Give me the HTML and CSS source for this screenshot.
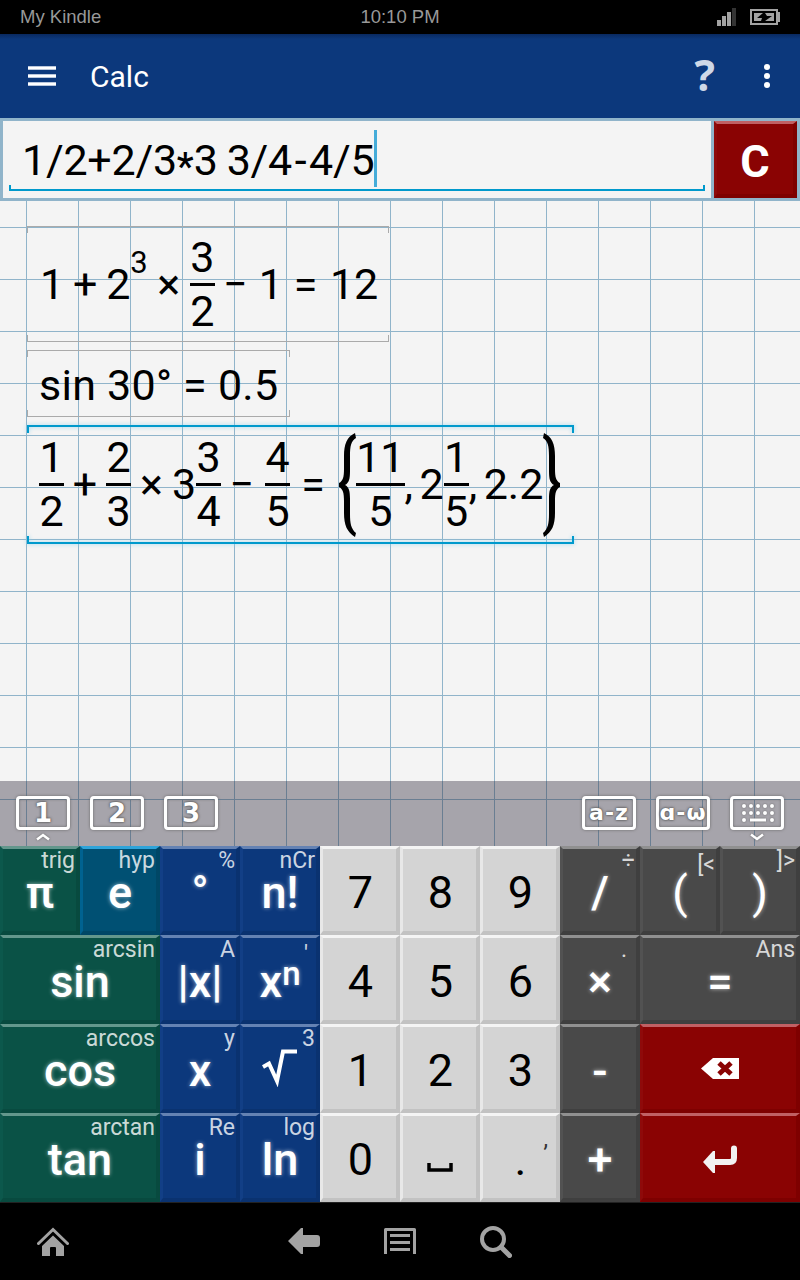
FILE: index.html
```html
<!DOCTYPE html>
<html>
<head>
  <meta charset="UTF-8">
  <title>Calc</title>
  <link rel="stylesheet" href="styles.css">
</head>
<body>
  <div class="statusbar">
    <span class="device">My Kindle</span>
    <span class="clock">10:10 PM</span>
    <div class="indicators">
      <svg width="19" height="18" viewBox="0 0 19 18">
        <path fill="#a3a3a3" d="M0 12h4v6H0zM5 8h4v10H5zM10 4h4v14h-4z"/>
        <path fill="#333" d="M15 0h4v18h-4z"/>
      </svg>
      <svg width="30" height="16" viewBox="0 0 30 16">
        <path fill="none" stroke="#a3a3a3" stroke-width="2" d="M1 1h26v14H1z"/>
        <path fill="#a3a3a3" d="M28 3h2v10h-2zM4 4h9l-6 5h5l-1 3H4zM15 4h9v8h-9l7-5h-5z"/>
      </svg>
    </div>
  </div>

  <header>
    <svg class="menu" width="28" height="22" viewBox="0 0 28 22">
      <path stroke="#b9c6dc" stroke-width="4" d="M0 3h28M0 11h28M0 19h28"/>
      <path stroke="#fff" stroke-width="2" d="M0 3h28M0 11h28M0 19h28"/>
    </svg>
    <h1>Calc</h1>
    <span class="help">?</span>
    <svg width="6" height="24" viewBox="0 0 6 24">
      <g fill="#fff"><circle cx="3" cy="3" r="3"/><circle cx="3" cy="12" r="3"/><circle cx="3" cy="21" r="3"/></g>
    </svg>
  </header>

  <div class="entry">
    <div class="field"><div class="line"><span>1/2+2/3</span><span class="star">*</span><span>3 3/4</span><span class="dash">-</span><span>4/5</span><i class="cursor"></i></div></div>
    <button class="clear red">C</button>
  </div>

  <div class="paper">
    <div class="sheet">
      <div class="expr first">
        <span>1</span><span class="op w42">+</span><span>2</span><span class="sup">3</span><span class="op w42">×</span>
        <span class="frac"><span>3</span><span>2</span></span>
        <span class="op w45">−</span><span>1</span><span class="op w47">=</span><span>12</span>
      </div>
      <div class="expr second"><span>sin 30° = 0.5</span></div>
      <div class="expr third">
        <span class="frac"><span>1</span><span>2</span></span>
        <span class="op w42">+</span>
        <span class="frac"><span>2</span><span>3</span></span>
        <span class="op w41">×</span><span>3</span>
        <span class="frac"><span>3</span><span>4</span></span>
        <span class="op w44">−</span>
        <span class="frac"><span>4</span><span>5</span></span>
        <span class="op w49">=</span>
        <svg class="brace" width="17" height="104" viewBox="0 0 17 104">
          <path d="M16 0C8 4 5 11 5 23V36C5 44 4 48 0 50V54C4 56 5 60 5 68V80C5 92 8 99 16 104L17 100C12 96 11 90 11 81V66C11 58 10 54 6 52C10 50 11 46 11 38V23C11 13 12 8 17 5Z"/>
        </svg>
        <span class="frac"><span>11</span><span>5</span></span>
        <span class="comma">,</span><span>2</span>
        <span class="frac"><span>1</span><span>5</span></span>
        <span class="comma">,</span><span>2.2</span>
        <svg class="brace" width="17" height="104" viewBox="0 0 17 104">
          <path transform="matrix(-1 0 0 1 17 0)" d="M16 0C8 4 5 11 5 23V36C5 44 4 48 0 50V54C4 56 5 60 5 68V80C5 92 8 99 16 104L17 100C12 96 11 90 11 81V66C11 58 10 54 6 52C10 50 11 46 11 38V23C11 13 12 8 17 5Z"/>
        </svg>
      </div>
    </div>

    <div class="toolbar">
      <div class="tab">1
        <svg class="arrow" width="14" height="8" viewBox="0 0 14 8"><path d="M1 6.500L7 2l6 4.500"/></svg>
      </div>
      <div class="tab">2</div>
      <div class="tab">3</div>
      <div class="tab alpha push">a-z</div>
      <div class="tab alpha">ɑ-ω</div>
      <div class="tab">
        <svg class="dots" width="34" height="20" viewBox="0 0 34 20">
          <path stroke="#fff" stroke-width="4" stroke-linecap="round" stroke-dasharray="0 7" d="M3 3h29M3 10h29"/>
          <path stroke="#fff" stroke-width="4" stroke-linecap="round" d="M3 17h0M31 17h0"/>
          <path stroke="#fff" stroke-width="3" d="M9 17h16"/>
        </svg>
        <svg class="arrow" width="14" height="8" viewBox="0 0 14 8"><path d="M1 1.500L7 6l6-4.500"/></svg>
      </div>
    </div>
  </div>

  <div class="keys">
    <div class="key green">π<small>trig</small></div>
    <div class="key teal">e<small>hyp</small></div>
    <div class="key blue">°<small>%</small></div>
    <div class="key blue">n!<small>nCr</small></div>
    <div class="key num">7</div>
    <div class="key num">8</div>
    <div class="key num">9</div>
    <div class="key gray">/<small>÷</small></div>
    <div class="key gray paren">(<small class="low">[&lt;</small></div>
    <div class="key gray paren">)<small>]&gt;</small></div>

    <div class="key green wide">sin<small>arcsin</small></div>
    <div class="key blue">|x|<small>A</small></div>
    <div class="key blue">x<span class="pow">n</span><small class="prime">'</small></div>
    <div class="key num">4</div>
    <div class="key num">5</div>
    <div class="key num">6</div>
    <div class="key gray">×<small class="dot">.</small></div>
    <div class="key gray wide">=<small>Ans</small></div>

    <div class="key green wide">cos<small>arccos</small></div>
    <div class="key blue">x<small>y</small></div>
    <div class="key blue root">
      <svg width="36" height="38" viewBox="0 0 36 38"><path fill="none" stroke="#fff" stroke-width="4" d="M1 18L7 14.500L15 32L21 2.500H35"/></svg>
      <small>3</small>
    </div>
    <div class="key num">1</div>
    <div class="key num">2</div>
    <div class="key num">3</div>
    <div class="key gray">-</div>
    <div class="key red wide erase">
      <svg width="38" height="21" viewBox="0 0 38 21">
        <path fill="#fff" d="M0 10.500L12 0H38V21H12Z"/>
        <path stroke="#8a0303" stroke-width="5" d="M18 5l12 11M30 5L18 16"/>
      </svg>
    </div>

    <div class="key green wide">tan<small>arctan</small></div>
    <div class="key blue">i<small>Re</small></div>
    <div class="key blue">ln<small>log</small></div>
    <div class="key num">0</div>
    <div class="key num space"><svg width="26" height="9" viewBox="0 0 26 9"><path fill="none" stroke="#000" stroke-width="3.500" d="M2 0v7h22V0"/></svg></div>
    <div class="key num">.<small class="tick">,</small></div>
    <div class="key gray">+</div>
    <div class="key red wide enter">
      <svg width="34" height="28" viewBox="0 0 34 28">
        <path fill="none" stroke="#f2f2f2" stroke-width="6" stroke-linecap="round" d="M31 3.500V13q0 4-4 4H11"/>
        <path fill="#f2f2f2" d="M0 17L10 6h2v22h-2z"/>
      </svg>
    </div>
  </div>

  <div class="navbar">
    <svg width="32" height="32" viewBox="0 0 32 32">
      <path fill="none" stroke="#a3a3a3" stroke-width="3" stroke-linecap="round" d="M1.500 17.500L16 3.500l14.500 14"/>
      <path fill="#a3a3a3" d="M5 20L16 9.500 27 20v10h-8v-8q0-1-1-1h-4q-1 0-1 1v8H5z"/>
    </svg>
    <svg class="back" width="32" height="32" viewBox="0 0 32 32">
      <path fill="#a3a3a3" d="M0 15L13 2h2v7h14q3 0 3 3v6q0 3-3 3H15v7h-2z"/>
    </svg>
    <svg width="32" height="32" viewBox="0 0 32 32">
      <path fill="none" stroke="#a3a3a3" stroke-width="3" stroke-linejoin="round" d="M1.500 28V3.500h29V28"/>
      <path stroke="#a3a3a3" stroke-width="3" d="M6 9.500h20M6 16.500h20M6 23.500h20"/>
    </svg>
    <svg width="32" height="32" viewBox="0 0 32 32">
      <circle cx="13" cy="13" r="11" fill="none" stroke="#a3a3a3" stroke-width="4"/>
      <path stroke="#a3a3a3" stroke-width="5" stroke-linecap="round" d="M21 21l8.500 8.500"/>
    </svg>
  </div>
</body>
</html>
```

FILE: styles.css
```css
* {
  box-sizing: border-box;
}

body {
  margin: 0;
  width: 800px;
  height: 1280px;
  overflow: hidden;
  background-color: #000;
  font-family: Roboto, "Noto Sans", sans-serif;
  display: flex;
  flex-direction: column;
}

svg {
  display: block;
  flex: none;
}

/* Status bar */
.statusbar {
  height: 34px;
  padding: 0 20px;
  display: grid;
  grid-template-columns: 1fr auto 1fr;
  align-items: center;
  color: #999;
  font: 18.5px "Liberation Sans", sans-serif;
}

.indicators {
  display: flex;
  gap: 14px;
  align-items: center;
  justify-content: flex-end;
}

/* Title bar */
header {
  height: 84px;
  padding: 0 30px 0 28px;
  display: flex;
  align-items: center;
  background: linear-gradient(#09295f, #0c387c 5px);
  color: #fff;
}

h1 {
  margin: 0 auto 0 34px;
  font-size: 30px;
  font-weight: 400;
}

.help {
  margin: -3px 49px 0 0;
  color: #cfd8e7;
  font: bold 43px "Open Sans", sans-serif;
}

/* Entry field */
.entry {
  height: 83px;
  padding: 3px;
  display: flex;
  gap: 3px;
  background-color: #90b4ca;
}

.field {
  flex: 1;
  padding: 0 6px;
  background-color: #f4f4f4;
}

.line {
  height: 70px;
  padding: 9px 0 0 13px;
  display: flex;
  background:
    linear-gradient(#09c, #09c) 0 100% / 100% 2px no-repeat,
    linear-gradient(#09c, #09c) 0 100% / 2px 6px no-repeat,
    linear-gradient(#09c, #09c) 100% 100% / 2px 6px no-repeat;
  font-size: 43px;
  line-height: 61px;
  letter-spacing: -0.25px;
  word-spacing: -1.5px;
  white-space: pre;
}

.star {
  width: 17px;
  padding-top: 7px;
  font-size: 38px;
  font-weight: 500;
}

.dash {
  width: 17px;
  text-align: center;
}

.cursor {
  width: 3px;
  height: 57px;
  background-color: #45acd9;
}

.clear {
  width: 83px;
  padding: 4px 0 0;
  color: #fff;
  font: bold 45px Roboto, sans-serif;
}

/* Squared paper */
.paper {
  height: 645px;
  background:
    linear-gradient(#90b4ca 1px, transparent 1px) 26px 26px / 52px 52px,
    linear-gradient(90deg, #90b4ca 1px, transparent 1px) 26px 26px / 52px 52px,
    #f4f4f4;
}

.sheet {
  height: 580px;
  padding: 25px 0 0 27px;
}

.expr {
  position: relative;
  width: max-content;
  display: flex;
  align-items: center;
  font-size: 43px;
  line-height: 51px;
  white-space: pre;
}

.expr::before,
.expr::after {
  content: "";
  position: absolute;
  left: 0;
  right: 0;
  height: 6px;
  border: 1px solid #aaa;
}

.expr::before {
  top: 0;
  border-bottom: 0;
}

.expr::after {
  bottom: 0;
  border-top: 0;
}

.first {
  width: 362px;
  height: 116px;
  padding-left: 13px;
}

.second {
  width: 263px;
  height: 67px;
  margin-top: 8px;
  padding: 3px 0 0 12px;
  letter-spacing: 0.25px;
}

.third {
  width: 547px;
  height: 119px;
  margin-top: 8px;
  padding-left: 12px;
}

.third::before,
.third::after {
  border-width: 2px;
  border-color: #09c;
  filter: drop-shadow(0 0 2px #8fd3ee);
}

.op {
  text-align: center;
}

.w41 { width: 41px; }
.w42 { width: 42px; }
.w44 { width: 44px; padding-right: 3px; }
.w45 { width: 44px; padding-right: 3px; }
.w47 { width: 47px; padding-right: 2px; }
.w49 { width: 49px; padding-right: 3px; }

.sup {
  font-size: 31px;
  margin-bottom: 43px;
}

.frac {
  min-width: 25px;
  display: flex;
  flex-direction: column;
  text-align: center;
}

.frac span:first-child {
  border-bottom: 3px solid #000;
}

.comma {
  width: 15px;
}

/* Keyboard switcher */
.toolbar {
  height: 65px;
  padding: 15px 16px 0;
  display: flex;
  gap: 20px;
  background-color: rgba(50, 44, 62, 0.4);
}

.tab {
  position: relative;
  width: 54px;
  height: 34px;
  border: 3px solid #fff;
  border-radius: 4px;
  box-shadow: 0 0 3px #666, inset 0 0 3px #666;
  color: #fff;
  font: bold 26px/29px "DejaVu Sans", sans-serif;
  text-align: center;
  text-shadow: 0 0 2px #555, 0 0 3px #555;
}

.alpha {
  font-size: 22px;
  line-height: 27px;
  letter-spacing: 1px;
  display: flex;
  justify-content: center;
}

.push {
  margin-left: auto;
}

.dots {
  margin: 4px auto 0 8px;
  filter: drop-shadow(0 0 1px #666);
}

.arrow {
  position: absolute;
  left: 17px;
  top: 34px;
  fill: none;
  stroke: #fff;
  stroke-width: 2.5;
  filter: drop-shadow(0 0 1px #666);
}

/* Keypad */
.keys {
  display: grid;
  grid-template-columns: repeat(10, 80px);
  grid-auto-rows: 89px;
}

.key {
  position: relative;
  display: flex;
  align-items: center;
  justify-content: center;
  padding: 5px 0 0 1px;
  color: #fff;
  font-size: 45px;
  font-weight: 500;
  line-height: 1;
  text-shadow: 0 0 4px rgba(255, 255, 255, 0.6);
}

.key, .clear {
  border-style: solid;
  border-width: 3px 4px 4px 3px;
}

.key small {
  position: absolute;
  top: 0;
  right: 1px;
  color: rgba(255, 255, 255, 0.8);
  font-size: 23px;
  font-weight: 400;
  text-shadow: none;
}

.wide {
  grid-column: span 2;
}

.green {
  background-color: #0a5246;
  border-color: #63978c #084a3f #084a3f #0c584c;
}

.teal {
  background-color: #005073;
  border-color: #2fa4d9 #004766 #004766 #006290;
}

.blue {
  background-color: #0c387c;
  border-color: #6482b3 #0a3270 #0a3270 #123f86;
}

.gray {
  background-color: #494949;
  border-color: #909090 #3f3f3f #3f3f3f #525252;
}

.red {
  background-color: #8a0303;
  border-color: #c06064 #7e0000 #7e0000 #8e0a0a;
}

.num {
  background-color: #d4d4d4;
  border-color: #f4f4f4 #c2c2c2 #c2c2c2 #e8e8e8;
  color: #000;
  font-weight: 400;
  text-shadow: none;
}

.num:not(.space) {
  padding-left: 2px;
}

.paren {
  font-weight: 400;
}

.pow {
  font-size: 33px;
  margin-bottom: 17px;
}

.root {
  padding: 0;
}

.erase {
  padding: 0;
}

.enter {
  padding-top: 3px;
}

.key.space {
  padding: 20px 0 0;
}

.key .low {
  top: 4px;
}

.key .prime {
  right: 8px;
  top: 5px;
}

.key .dot {
  right: 9px;
}

.key .tick {
  top: 12px;
  right: 8px;
  color: #333;
}

/* Bottom navigation */
.navbar {
  height: 78px;
  padding: 0 37px;
  display: flex;
  gap: 64px;
  align-items: center;
  border-top: 1px solid #222;
}

.back {
  margin-left: 155px;
}
```
